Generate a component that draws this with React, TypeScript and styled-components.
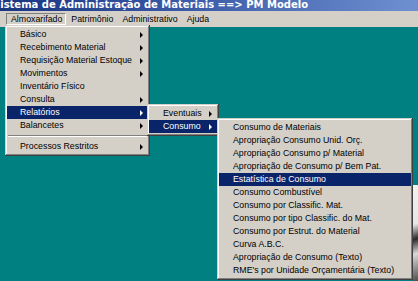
import React from "react";
import styled, { createGlobalStyle } from "styled-components";

const GlobalStyle = createGlobalStyle`
  html, body { margin: 0; padding: 0; overflow: hidden; }
  body { font-family: "Liberation Sans", Arial, sans-serif; }
`;

const Screen = styled.div`
  position: relative;
  width: 418px;
  height: 281px;
  overflow: hidden;
  display: flex;
  flex-direction: column;
  background: #008080;
`;

const TitleBar = styled.div`
  height: 11px;
  flex: none;
  background: linear-gradient(90deg, #1a3580 0%, #3b5aa8 45%, #6f90d0 100%);
  color: #fff;
  font: bold 10px "DejaVu Sans", "Liberation Sans", sans-serif;
  line-height: 10px;
  white-space: nowrap;
  overflow: hidden;
`;

const TitleText = styled.span`
  display: inline-block;
  margin-left: -7px;
`;

const MenuBar = styled.div`
  height: 16px;
  flex: none;
  background: #d4d0c8;
  display: flex;
  align-items: center;
  padding-left: 6px;
  font-size: 8.8px;
  color: #000;
`;

const MenuBarItem = styled.div<{ $pressed?: boolean }>`
  height: 12px;
  line-height: 11px;
  padding: 0 3px 0 4px;
  box-sizing: border-box;
  border: 1px solid transparent;
  border-color: ${(p) => (p.$pressed ? "#808080 #fff #fff #808080" : "transparent")};
`;

const Desktop = styled.div`
  flex: 1;
  background: #008080;
  position: relative;
`;

const BehindWindow = styled.div`
  position: absolute;
  left: 413px;
  top: 158px;
  width: 10px;
  bottom: 0;
  background: linear-gradient(160deg, #f2f2f0 0%, #e6e6e4 40%, #2a2a2a 55%, #d8d8d8 70%, #444 100%);
`;

const Menu = styled.div<{ $left: number; $top: number; $width: number }>`
  position: absolute;
  left: ${(p) => p.$left}px;
  top: ${(p) => p.$top}px;
  width: ${(p) => p.$width}px;
  box-sizing: border-box;
  background: #d4d0c8;
  padding: 3px 2px;
  box-shadow: inset -1px -1px #404040, inset 1px 1px #d4d0c8,
    inset -2px -2px #808080, inset 2px 2px #ffffff;
  font-size: 8.8px;
  color: #000;
  display: flex;
  flex-direction: column;
`;

const Item = styled.div<{ $active?: boolean; $pad: number }>`
  height: 13px;
  line-height: 13px;
  display: flex;
  align-items: center;
  padding-left: ${(p) => p.$pad}px;
  padding-right: 5px;
  white-space: nowrap;
  background: ${(p) => (p.$active ? "#0a246a" : "transparent")};
  color: ${(p) => (p.$active ? "#fff" : "#000")};
`;

const Label = styled.span`
  flex: 1;
`;

const Arrow = styled.span`
  width: 0;
  height: 0;
  border-top: 3px solid transparent;
  border-bottom: 3px solid transparent;
  border-left: 3px solid currentColor;
`;

const Separator = styled.div`
  height: 8px;
  display: flex;
  align-items: center;
  padding: 0 1px;
  &::after {
    content: "";
    flex: 1;
    height: 0;
    border-top: 1px solid #808080;
    border-bottom: 1px solid #fff;
  }
`;

type Entry = { label: string; sub?: boolean; active?: boolean } | "sep";

const menu1: Entry[] = [
  { label: "Básico", sub: true },
  { label: "Recebimento Material", sub: true },
  { label: "Requisição Material Estoque", sub: true },
  { label: "Movimentos", sub: true },
  { label: "Inventário Físico" },
  { label: "Consulta", sub: true },
  { label: "Relatórios", sub: true, active: true },
  { label: "Balancetes", sub: true },
  "sep",
  { label: "Processos Restritos", sub: true },
];

const menu2: Entry[] = [
  { label: "Eventuais", sub: true },
  { label: "Consumo", sub: true, active: true },
];

const menu3: Entry[] = [
  { label: "Consumo de Materiais" },
  { label: "Apropriação Consumo Unid. Orç." },
  { label: "Apropriação Consumo p/ Material" },
  { label: "Apropriação de Consumo p/ Bem Pat." },
  { label: "Estatística de Consumo", active: true },
  { label: "Consumo Combustível" },
  { label: "Consumo por Classific. Mat." },
  { label: "Consumo por tipo Classific. do Mat." },
  { label: "Consumo por Estrut. do Material" },
  { label: "Curva A.B.C." },
  { label: "Apropriação de Consumo (Texto)" },
  { label: "RME's por Unidade Orçamentária (Texto)" },
];

function MenuList({ items, pad }: { items: Entry[]; pad: number }) {
  return (
    <>
      {items.map((e, i) =>
        e === "sep" ? (
          <Separator key={i} />
        ) : (
          <Item key={i} $active={e.active} $pad={pad}>
            <Label>{e.label}</Label>
            {e.sub && <Arrow />}
          </Item>
        )
      )}
    </>
  );
}

export default function App() {
  return (
    <>
      <GlobalStyle />
      <Screen>
        <TitleBar>
          <TitleText>Sistema de Administração de Materiais ==&gt; PM Modelo</TitleText>
        </TitleBar>
        <MenuBar>
          <MenuBarItem $pressed>Almoxarifado</MenuBarItem>
          <MenuBarItem>Patrimônio</MenuBarItem>
          <MenuBarItem>Administrativo</MenuBarItem>
          <MenuBarItem>Ajuda</MenuBarItem>
        </MenuBar>
        <Desktop>
          <BehindWindow />
        </Desktop>
        <Menu $left={5} $top={25} $width={145}>
          <MenuList items={menu1} pad={13} />
        </Menu>
        <Menu $left={147} $top={104} $width={72}>
          <MenuList items={menu2} pad={14} />
        </Menu>
        <Menu $left={217} $top={118} $width={196}>
          <MenuList items={menu3} pad={14} />
        </Menu>
      </Screen>
    </>
  );
}
